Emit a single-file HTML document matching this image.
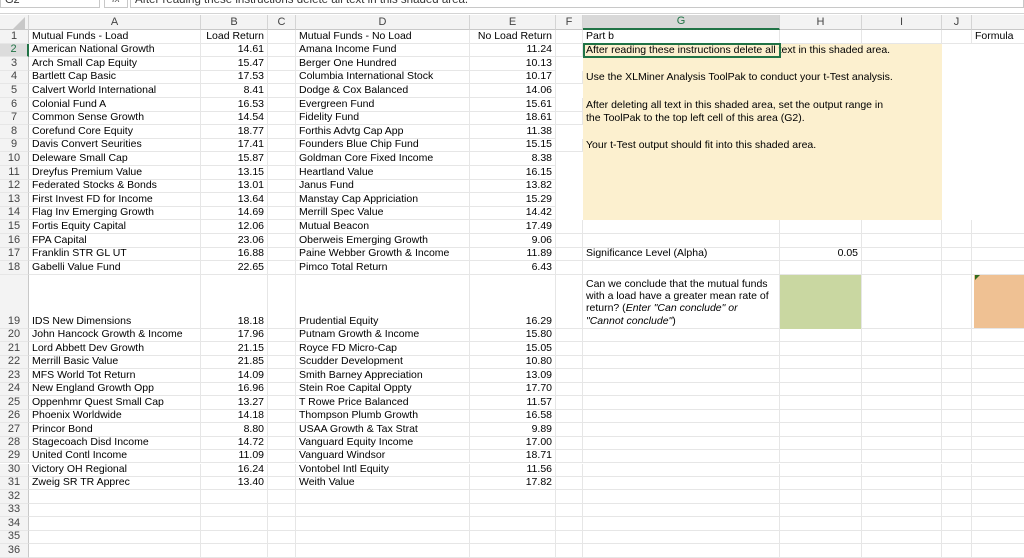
<!DOCTYPE html>
<html><head><meta charset="utf-8"><style>
*{margin:0;padding:0;box-sizing:border-box}
body{width:1024px;height:552px;overflow:hidden;background:#fff;font-family:"Liberation Sans",Arial,sans-serif;font-size:10.5px;color:#000;position:relative}
.fb{position:absolute;left:0;top:0;width:1024px;height:14px;background:#fff;border-bottom:1px solid #d4d4d4}
.nb{position:absolute;left:0;top:-4px;width:100px;height:12px;border:1px solid #c8c8c8;border-top:none;font-size:11px;padding-left:4px;color:#333;line-height:8px}
.fx{position:absolute;left:104px;top:-4px;width:24px;height:12px;border:1px solid #c8c8c8;border-top:none;font-style:italic;font-size:10px;line-height:8px;text-align:center;color:#555}
.ft{position:absolute;left:130px;top:-4px;width:894px;height:12px;border:1px solid #c8c8c8;border-top:none;font-size:11.5px;line-height:8px;padding-left:4px;color:#333}
.r{position:absolute;left:0;width:1024px;display:flex}
.c{flex:none;border-right:1px solid #e6e6e6;border-bottom:1px solid #e6e6e6;white-space:nowrap;overflow:visible;padding:0 3px;line-height:13px;display:flex;align-items:flex-end}
.h .c{background:#f3f3f3;border-right:1px solid #d4d4d4;border-bottom:1px solid #c8c8c8;justify-content:center;align-items:center;color:#444;font-size:11px}
.n{background:#f3f3f3;border-right:1px solid #c8c8c8!important;justify-content:center;color:#444;font-size:11px}
.rt{justify-content:flex-end}
.w0{width:29px}.w1{width:172px}.w2{width:67px}.w3{width:28px}.w4{width:174px}.w5{width:86px}.w6{width:27px}.w7{width:197px}.w8{width:82px}.w9{width:80px}.w10{width:30px}.w11{width:53px}
.y{position:absolute;left:583px;top:43px;width:359px;height:177px;background:#fcf0cf}
.nb2{border:none!important;background:transparent}
</style></head><body>
<div class="fb"><div class="nb">G2</div><div class="fx">fx</div><div class="ft">After reading these instructions delete all text in this shaded area.</div></div>
<div class="y"></div>
<div style="position:absolute;left:780px;top:275px;width:82px;height:54px;background:#c9d7a1"></div>
<div style="position:absolute;left:974px;top:275px;width:50px;height:54px;background:#efc193"></div>
<div style="position:absolute;left:975px;top:275px;width:0;height:0;border-top:5px solid #2f6b1f;border-right:5px solid transparent"></div>
<div class="r h" style="top:15px;height:15px"><div class="c w0" style="background:#f3f3f3"><svg width="12" height="12" style="margin-left:10px;margin-top:2px"><path d="M12 0 L12 12 L0 12Z" fill="#c8c8c8"/></svg></div><div class="c w1">A</div><div class="c w2">B</div><div class="c w3">C</div><div class="c w4">D</div><div class="c w5">E</div><div class="c w6">F</div><div class="c w7" style="background:#d8d8d8;border-bottom:2px solid #217346;color:#217346">G</div><div class="c w8">H</div><div class="c w9">I</div><div class="c w10">J</div><div class="c w11"></div></div>
<div class="r" style="top:30px;height:13.6px"><div class="c w0 n">1</div><div class="c w1">Mutual Funds - Load</div><div class="c w2 rt">Load Return</div><div class="c w3"></div><div class="c w4">Mutual Funds - No Load</div><div class="c w5 rt">No Load Return</div><div class="c w6"></div><div class="c w7">Part b</div><div class="c w8"></div><div class="c w9"></div><div class="c w10"></div><div class="c w11">Formula</div></div>
<div class="r" style="top:43.6px;height:13.6px"><div class="c w0 n" style="background:#dcdcdc;border-right:2px solid #217346!important;color:#217346">2</div><div class="c w1">American National Growth</div><div class="c w2 rt">14.61</div><div class="c w3"></div><div class="c w4">Amana Income Fund</div><div class="c w5 rt">11.24</div><div class="c w6"></div><div class="c w7 nb2">After reading these instructions delete all text in this shaded area.</div></div>
<div style="position:absolute;left:583px;top:43px;width:198px;height:15px;border:2px solid #217346"></div>
<div class="r" style="top:57.2px;height:13.6px"><div class="c w0 n">3</div><div class="c w1">Arch Small Cap Equity</div><div class="c w2 rt">15.47</div><div class="c w3"></div><div class="c w4">Berger One Hundred</div><div class="c w5 rt">10.13</div></div>
<div class="r" style="top:70.8px;height:13.6px"><div class="c w0 n">4</div><div class="c w1">Bartlett Cap Basic</div><div class="c w2 rt">17.53</div><div class="c w3"></div><div class="c w4">Columbia International Stock</div><div class="c w5 rt">10.17</div><div class="c w6"></div><div class="c w7 nb2">Use the XLMiner Analysis ToolPak to conduct your t-Test analysis.</div></div>
<div class="r" style="top:84.4px;height:13.6px"><div class="c w0 n">5</div><div class="c w1">Calvert World International</div><div class="c w2 rt">8.41</div><div class="c w3"></div><div class="c w4">Dodge &amp; Cox Balanced</div><div class="c w5 rt">14.06</div></div>
<div class="r" style="top:98px;height:13.6px"><div class="c w0 n">6</div><div class="c w1">Colonial Fund A</div><div class="c w2 rt">16.53</div><div class="c w3"></div><div class="c w4">Evergreen Fund</div><div class="c w5 rt">15.61</div><div class="c w6"></div><div class="c w7 nb2">After deleting all text in this shaded area, set the output range in</div></div>
<div class="r" style="top:111.6px;height:13.6px"><div class="c w0 n">7</div><div class="c w1">Common Sense Growth</div><div class="c w2 rt">14.54</div><div class="c w3"></div><div class="c w4">Fidelity Fund</div><div class="c w5 rt">18.61</div><div class="c w6"></div><div class="c w7 nb2">the ToolPak to the top left cell of this area (G2).</div></div>
<div class="r" style="top:125.2px;height:13.6px"><div class="c w0 n">8</div><div class="c w1">Corefund Core Equity</div><div class="c w2 rt">18.77</div><div class="c w3"></div><div class="c w4">Forthis Advtg Cap App</div><div class="c w5 rt">11.38</div></div>
<div class="r" style="top:138.8px;height:13.6px"><div class="c w0 n">9</div><div class="c w1">Davis Convert Seurities</div><div class="c w2 rt">17.41</div><div class="c w3"></div><div class="c w4">Founders Blue Chip Fund</div><div class="c w5 rt">15.15</div><div class="c w6"></div><div class="c w7 nb2">Your t-Test output should fit into this shaded area.</div></div>
<div class="r" style="top:152.4px;height:13.6px"><div class="c w0 n">10</div><div class="c w1">Deleware Small Cap</div><div class="c w2 rt">15.87</div><div class="c w3"></div><div class="c w4">Goldman Core Fixed Income</div><div class="c w5 rt">8.38</div></div>
<div class="r" style="top:166px;height:13.6px"><div class="c w0 n">11</div><div class="c w1">Dreyfus Premium Value</div><div class="c w2 rt">13.15</div><div class="c w3"></div><div class="c w4">Heartland Value</div><div class="c w5 rt">16.15</div></div>
<div class="r" style="top:179.6px;height:13.6px"><div class="c w0 n">12</div><div class="c w1">Federated Stocks &amp; Bonds</div><div class="c w2 rt">13.01</div><div class="c w3"></div><div class="c w4">Janus Fund</div><div class="c w5 rt">13.82</div></div>
<div class="r" style="top:193.2px;height:13.6px"><div class="c w0 n">13</div><div class="c w1">First Invest FD for Income</div><div class="c w2 rt">13.64</div><div class="c w3"></div><div class="c w4">Manstay Cap Appriciation</div><div class="c w5 rt">15.29</div></div>
<div class="r" style="top:206.8px;height:13.6px"><div class="c w0 n">14</div><div class="c w1">Flag Inv Emerging Growth</div><div class="c w2 rt">14.69</div><div class="c w3"></div><div class="c w4">Merrill Spec Value</div><div class="c w5 rt">14.42</div></div>
<div class="r" style="top:220.4px;height:13.6px"><div class="c w0 n">15</div><div class="c w1">Fortis Equity Capital</div><div class="c w2 rt">12.06</div><div class="c w3"></div><div class="c w4">Mutual Beacon</div><div class="c w5 rt">17.49</div><div class="c w6"></div><div class="c w7"></div><div class="c w8"></div><div class="c w9"></div><div class="c w10"></div><div class="c w11"></div></div>
<div class="r" style="top:234px;height:13.6px"><div class="c w0 n">16</div><div class="c w1">FPA Capital</div><div class="c w2 rt">23.06</div><div class="c w3"></div><div class="c w4">Oberweis Emerging Growth</div><div class="c w5 rt">9.06</div><div class="c w6"></div><div class="c w7"></div><div class="c w8"></div><div class="c w9"></div><div class="c w10"></div><div class="c w11"></div></div>
<div class="r" style="top:247.6px;height:13.6px"><div class="c w0 n">17</div><div class="c w1">Franklin STR GL UT</div><div class="c w2 rt">16.88</div><div class="c w3"></div><div class="c w4">Paine Webber Growth &amp; Income</div><div class="c w5 rt">11.89</div><div class="c w6"></div><div class="c w7">Significance Level (Alpha)</div><div class="c w8 rt">0.05</div><div class="c w9"></div><div class="c w10"></div><div class="c w11"></div></div>
<div class="r" style="top:261.2px;height:13.6px"><div class="c w0 n">18</div><div class="c w1">Gabelli Value Fund</div><div class="c w2 rt">22.65</div><div class="c w3"></div><div class="c w4">Pimco Total Return</div><div class="c w5 rt">6.43</div><div class="c w6"></div><div class="c w7"></div><div class="c w8"></div><div class="c w9"></div><div class="c w10"></div><div class="c w11"></div></div>
<div class="r" style="top:274.8px;height:54.2px"><div class="c w0 n">19</div><div class="c w1">IDS New Dimensions</div><div class="c w2 rt">18.18</div><div class="c w3"></div><div class="c w4">Prudential Equity</div><div class="c w5 rt">16.29</div><div class="c w6"></div><div class="c w7" style="white-space:normal;line-height:12.3px;align-items:flex-start;padding-top:3px;padding-right:0"><span style="width:187px">Can we conclude that the mutual funds with a load have a greater mean rate of return? (<i>Enter "Can conclude" or "Cannot conclude"</i>)</span></div><div class="c w8" style="border-bottom:none"></div><div class="c w9"></div><div class="c w10"></div><div class="c w11"></div></div>
<div class="r" style="top:329px;height:13.45px"><div class="c w0 n">20</div><div class="c w1">John Hancock Growth &amp; Income</div><div class="c w2 rt">17.96</div><div class="c w3"></div><div class="c w4">Putnam Growth &amp; Income</div><div class="c w5 rt">15.80</div><div class="c w6"></div><div class="c w7"></div><div class="c w8"></div><div class="c w9"></div><div class="c w10"></div><div class="c w11"></div></div>
<div class="r" style="top:342.45px;height:13.45px"><div class="c w0 n">21</div><div class="c w1">Lord Abbett Dev Growth</div><div class="c w2 rt">21.15</div><div class="c w3"></div><div class="c w4">Royce FD Micro-Cap</div><div class="c w5 rt">15.05</div><div class="c w6"></div><div class="c w7"></div><div class="c w8"></div><div class="c w9"></div><div class="c w10"></div><div class="c w11"></div></div>
<div class="r" style="top:355.9px;height:13.45px"><div class="c w0 n">22</div><div class="c w1">Merrill Basic Value</div><div class="c w2 rt">21.85</div><div class="c w3"></div><div class="c w4">Scudder Development</div><div class="c w5 rt">10.80</div><div class="c w6"></div><div class="c w7"></div><div class="c w8"></div><div class="c w9"></div><div class="c w10"></div><div class="c w11"></div></div>
<div class="r" style="top:369.35px;height:13.45px"><div class="c w0 n">23</div><div class="c w1">MFS World Tot Return</div><div class="c w2 rt">14.09</div><div class="c w3"></div><div class="c w4">Smith Barney Appreciation</div><div class="c w5 rt">13.09</div><div class="c w6"></div><div class="c w7"></div><div class="c w8"></div><div class="c w9"></div><div class="c w10"></div><div class="c w11"></div></div>
<div class="r" style="top:382.8px;height:13.45px"><div class="c w0 n">24</div><div class="c w1">New England Growth Opp</div><div class="c w2 rt">16.96</div><div class="c w3"></div><div class="c w4">Stein Roe Capital Oppty</div><div class="c w5 rt">17.70</div><div class="c w6"></div><div class="c w7"></div><div class="c w8"></div><div class="c w9"></div><div class="c w10"></div><div class="c w11"></div></div>
<div class="r" style="top:396.25px;height:13.45px"><div class="c w0 n">25</div><div class="c w1">Oppenhmr Quest Small Cap</div><div class="c w2 rt">13.27</div><div class="c w3"></div><div class="c w4">T Rowe Price Balanced</div><div class="c w5 rt">11.57</div><div class="c w6"></div><div class="c w7"></div><div class="c w8"></div><div class="c w9"></div><div class="c w10"></div><div class="c w11"></div></div>
<div class="r" style="top:409.7px;height:13.45px"><div class="c w0 n">26</div><div class="c w1">Phoenix Worldwide</div><div class="c w2 rt">14.18</div><div class="c w3"></div><div class="c w4">Thompson Plumb Growth</div><div class="c w5 rt">16.58</div><div class="c w6"></div><div class="c w7"></div><div class="c w8"></div><div class="c w9"></div><div class="c w10"></div><div class="c w11"></div></div>
<div class="r" style="top:423.15px;height:13.45px"><div class="c w0 n">27</div><div class="c w1">Princor Bond</div><div class="c w2 rt">8.80</div><div class="c w3"></div><div class="c w4">USAA Growth &amp; Tax Strat</div><div class="c w5 rt">9.89</div><div class="c w6"></div><div class="c w7"></div><div class="c w8"></div><div class="c w9"></div><div class="c w10"></div><div class="c w11"></div></div>
<div class="r" style="top:436.6px;height:13.45px"><div class="c w0 n">28</div><div class="c w1">Stagecoach Disd Income</div><div class="c w2 rt">14.72</div><div class="c w3"></div><div class="c w4">Vanguard Equity Income</div><div class="c w5 rt">17.00</div><div class="c w6"></div><div class="c w7"></div><div class="c w8"></div><div class="c w9"></div><div class="c w10"></div><div class="c w11"></div></div>
<div class="r" style="top:450.05px;height:13.45px"><div class="c w0 n">29</div><div class="c w1">United Contl Income</div><div class="c w2 rt">11.09</div><div class="c w3"></div><div class="c w4">Vanguard Windsor</div><div class="c w5 rt">18.71</div><div class="c w6"></div><div class="c w7"></div><div class="c w8"></div><div class="c w9"></div><div class="c w10"></div><div class="c w11"></div></div>
<div class="r" style="top:463.5px;height:13.45px"><div class="c w0 n">30</div><div class="c w1">Victory OH Regional</div><div class="c w2 rt">16.24</div><div class="c w3"></div><div class="c w4">Vontobel Intl Equity</div><div class="c w5 rt">11.56</div><div class="c w6"></div><div class="c w7"></div><div class="c w8"></div><div class="c w9"></div><div class="c w10"></div><div class="c w11"></div></div>
<div class="r" style="top:476.95px;height:13.45px"><div class="c w0 n">31</div><div class="c w1">Zweig SR TR Apprec</div><div class="c w2 rt">13.40</div><div class="c w3"></div><div class="c w4">Weith Value</div><div class="c w5 rt">17.82</div><div class="c w6"></div><div class="c w7"></div><div class="c w8"></div><div class="c w9"></div><div class="c w10"></div><div class="c w11"></div></div>
<div class="r" style="top:490.4px;height:13.45px"><div class="c w0 n">32</div><div class="c w1"></div><div class="c w2"></div><div class="c w3"></div><div class="c w4"></div><div class="c w5"></div><div class="c w6"></div><div class="c w7"></div><div class="c w8"></div><div class="c w9"></div><div class="c w10"></div><div class="c w11"></div></div>
<div class="r" style="top:503.85px;height:13.45px"><div class="c w0 n">33</div><div class="c w1"></div><div class="c w2"></div><div class="c w3"></div><div class="c w4"></div><div class="c w5"></div><div class="c w6"></div><div class="c w7"></div><div class="c w8"></div><div class="c w9"></div><div class="c w10"></div><div class="c w11"></div></div>
<div class="r" style="top:517.3px;height:13.45px"><div class="c w0 n">34</div><div class="c w1"></div><div class="c w2"></div><div class="c w3"></div><div class="c w4"></div><div class="c w5"></div><div class="c w6"></div><div class="c w7"></div><div class="c w8"></div><div class="c w9"></div><div class="c w10"></div><div class="c w11"></div></div>
<div class="r" style="top:530.75px;height:13.45px"><div class="c w0 n">35</div><div class="c w1"></div><div class="c w2"></div><div class="c w3"></div><div class="c w4"></div><div class="c w5"></div><div class="c w6"></div><div class="c w7"></div><div class="c w8"></div><div class="c w9"></div><div class="c w10"></div><div class="c w11"></div></div>
<div class="r" style="top:544.2px;height:13.45px"><div class="c w0 n">36</div><div class="c w1"></div><div class="c w2"></div><div class="c w3"></div><div class="c w4"></div><div class="c w5"></div><div class="c w6"></div><div class="c w7"></div><div class="c w8"></div><div class="c w9"></div><div class="c w10"></div><div class="c w11"></div></div>
</body></html>
